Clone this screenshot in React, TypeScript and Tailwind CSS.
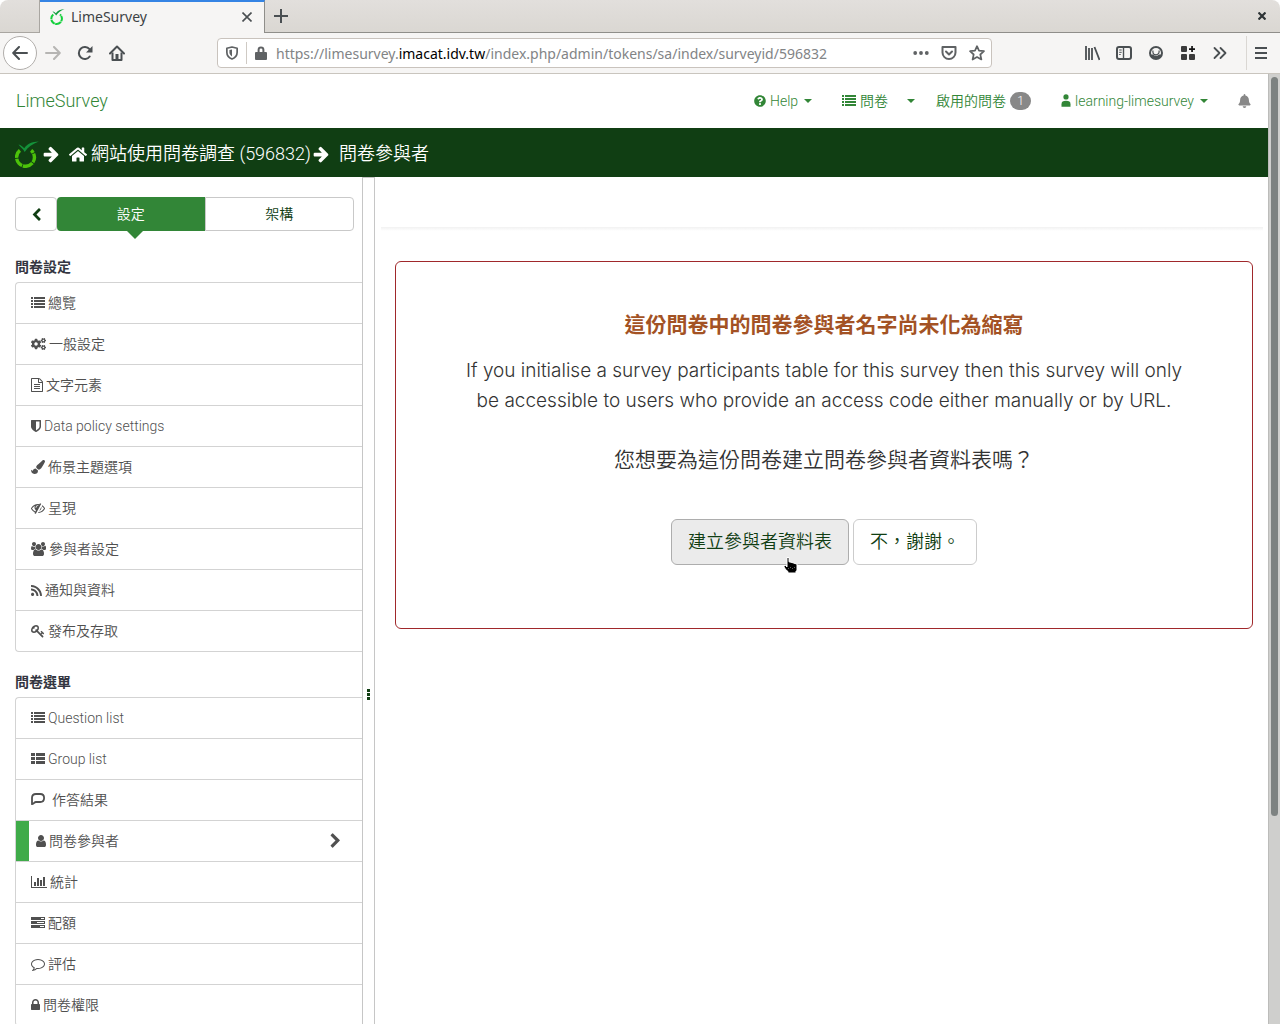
import React from 'react';
import { FaCogs, FaHome, FaQuestionCircle, FaRss, FaPaintBrush, FaBell } from 'react-icons/fa';

type GlyphProps = { d: string; box: string; className: string };

function Glyph({ d, box, className }: GlyphProps) {
  return (
    <svg viewBox={box} className={`shrink-0 ${className}`} fill="currentColor" aria-hidden="true">
      <path d={d} />
    </svg>
  );
}

const SHIELD =
  'M1344 960v-640h-448v1137q119-63 213-137 235-184 235-360zm192-768v768q0 86-33.5 170.5t-83 150-118 127.5-126.5 103-121 77.5-89.5 49.5-42.5 20q-12 6-26 6t-26-6q-16-7-42.5-20t-89.5-49.5-121-77.5-126.5-103-118-127.5-83-150-33.5-170.5v-768q0-26 19-45t45-19h1152q26 0 45 19t19 45z';
const FILE_TEXT =
  'M1596 380q28 28 48 76t20 88v1152q0 40-28 68t-68 28h-1344q-40 0-68-28t-28-68v-1600q0-40 28-68t68-28h896q40 0 88 20t76 48zm-444-244v376h376q-10-29-22-41l-313-313q-12-12-41-22zm384 1528v-1024h-416q-40 0-68-28t-28-68v-416h-768v1536h1280zm-1024-864q0-14 9-23t23-9h704q14 0 23 9t9 23v64q0 14-9 23t-23 9h-704q-14 0-23-9t-9-23v-64zm736 224q14 0 23 9t9 23v64q0 14-9 23t-23 9h-704q-14 0-23-9t-9-23v-64q0-14 9-23t23-9h704zm0 256q14 0 23 9t9 23v64q0 14-9 23t-23 9h-704q-14 0-23-9t-9-23v-64q0-14 9-23t23-9h704z';
const EYE_SLASH =
  'M555 1335l78-141q-87-63-136-159t-49-203q0-121 61-225-229 117-381 353 167 258 427 375zm389-759q0-20-14-34t-34-14q-125 0-214.5 89.5t-89.5 214.5q0 20 14 34t34 14 34-14 14-34q0-86 61-147t147-61q20 0 34-14t14-34zm363-191q0 7-1 9-105 188-315 566t-316 567l-49 89q-10 16-28 16-12 0-134-70-16-10-16-28 0-12 44-87-143-65-263.5-173t-208.5-245q-20-31-20-69t20-69q153-235 380-371t496-136q89 0 180 17l54-97q10-16 28-16 5 0 18 6t31 15.5 33 18.5 31.5 18.5 19.5 11.5q16 10 16 27zm37 447q0 139-79 253.5t-209 164.5l280-502q8 45 8 84zm448 128q0 35-20 69-39 64-109 145-150 172-347.5 267t-419.5 95l74-132q212-18 392.5-137t301.5-307q-115-179-282-294l63-112q95 64 182.5 153t144.5 184q20 34 20 69z';
const USERS =
  'M593 896q-162 5-265 128h-134q-82 0-138-40.5t-56-118.5q0-353 124-353 6 0 43.5 21t97.5 42.5 119 21.5q67 0 133-23-5 37-5 66 0 159 93 291zm1071 637q0 120-73 189.5t-194 69.5h-874q-121 0-194-69.5t-73-189.5q0-53 3.5-103.5t14-109 26.5-108.5 43-97.5 62-81 85.5-53.5 111.5-20q10 0 43 21.5t73 48 107 48 135 21.5 135-21.5 107-48 73-48 43-21.5q61 0 111.5 20t85.5 53.5 62 81 43 97.5 26.5 108.5 14 109 3.5 103.5zm-1024-1277q0 106-75 181t-181 75-181-75-75-181 75-181 181-75 181 75 75 181zm704 384q0 159-112.5 271.5t-271.5 112.5-271.5-112.5-112.5-271.5 112.5-271.5 271.5-112.5 271.5 112.5 112.5 271.5zm576 225q0 78-56 118.5t-138 40.5h-134q-103-123-265-128 93-132 93-291 0-29-5-66 66 23 133 23 59 0 119-21.5t97.5-42.5 43.5-21q124 0 124 353zm-128-609q0 106-75 181t-181 75-181-75-75-181 75-181 181-75 181 75 75 181z';
const KEY =
  'M832 512q0-80-56-136t-136-56-136 56-56 136q0 42 19 83-41-19-83-19-80 0-136 56t-56 136 56 136 136 56 136-56 56-136q0-42-19-83 41 19 83 19 80 0 136-56t56-136zm851 704q0 17-49 66t-66 49q-9 0-28.5-16t-36.5-33-38.5-40-24.5-26l-96 96 220 220q28 28 28 68 0 42-39 81t-81 39q-40 0-68-28l-671-671q-176 131-365 131-163 0-265.5-102.5t-102.5-265.5q0-160 95-313t248-248 313-95q163 0 265.5 102.5t102.5 265.5q0 189-131 365l355 355 96-96q-3-3-26-24.5t-40-38.5-33-36.5-16-28.5q0-17 49-66t66-49q13 0 23 10 6 6 46 44.5t82 79.5 86.5 86 73 78 28.5 41z';
const COMMENT =
  'M896 384q-204 0-381.5 69.5t-282 187.5-104.5 255q0 112 71.5 213.5t201.5 175.5l87 50-27 96q-24 91-70 172 152-63 275-171l43-38 57 6q69 8 130 8 204 0 381.5-69.5t282-187.5 104.5-255-104.5-255-282-187.5-381.5-69.5zm896 512q0 174-120 321.5t-326 233-450 85.5q-70 0-145-8-198 175-460 242-49 14-114 22h-5q-15 0-27-10.5t-16-27.5v-1q-3-4-.5-12t2-10 4.5-9.5l6-9 7-8.5 8-9q7-8 31-34.5t34.5-38 31-39.5 32.5-51 27-59 26-76q-157-89-247.5-220t-90.5-281q0-174 120-321.5t326-233 450-85.5 450 85.5 326 233 120 321.5z';
const USER =
  'M1536 1399q0 109-62.5 187t-150.5 78h-854q-88 0-150.5-78t-62.5-187q0-85 8.5-160.5t31.5-152 58.5-131 94-89 134.5-34.5q131 128 313 128t313-128q76 0 134.5 34.5t94 89 58.5 131 31.5 152 8.5 160.5zm-256-887q0 159-112.5 271.5t-271.5 112.5-271.5-112.5-112.5-271.5 112.5-271.5 271.5-112.5 271.5 112.5 112.5 271.5z';
const CHART =
  'M640 896v512h-256v-512h256zm384-512v1024h-256v-1024h256zm1024 1152v128h-2048v-1536h128v1408h1920zm-640-896v768h-256v-768h256zm384-384v1152h-256v-1152h256z';
const LOCK =
  'M640 768h512v-192q0-106-75-181t-181-75-181 75-75 181v192zm832 96v576q0 40-28 68t-68 28h-960q-40 0-68-28t-28-68v-576q0-40 28-68t68-28h32v-192q0-184 132-316t316-132 316 132 132 316v192h32q40 0 68 28t28 68z';
const CHEVRON =
  'M1363 877l-742 742q-19 19-45 19t-45-19l-166-166q-19-19-19-45t19-45l531-531-531-531q-19-19-19-45t19-45l166-166q19-19 45-19t45 19l742 742q19 19 19 45t-19 45z';
const ARROW =
  'M1600 960q0 54-37 91l-651 651q-39 37-91 37-51 0-90-37l-75-75q-38-38-38-91t38-91l293-293h-704q-52 0-84.5-37.5t-32.5-90.5v-128q0-53 32.5-90.5t84.5-37.5h704l-293-294q-38-36-38-90t38-90l75-75q38-38 90-38 53 0 91 38l651 651q37 35 37 90z';

const ListIcon = () => (
  <svg viewBox="0 0 14 14" className="h-3.5 w-3.5 shrink-0" fill="currentColor" aria-hidden="true">
    <path d="M0 1h2v2H0zM3 1h11v2H3zM0 4h2v2H0zM3 4h11v2H3zM0 7h2v2H0zM3 7h11v2H3zM0 10h2v2H0zM3 10h11v2H3z" />
  </svg>
);
const ThListIcon = () => (
  <svg viewBox="0 0 14 14" className="h-3.5 w-3.5 shrink-0" fill="currentColor" aria-hidden="true">
    <path d="M0 1h4v3H0zM5 1h9v3H5zM0 5h4v3H0zM5 5h9v3H5zM0 9h4v3H0zM5 9h9v3H5z" />
  </svg>
);
const TasksIcon = () => (
  <svg viewBox="0 0 14 14" className="h-3.5 w-3.5 shrink-0" fill="currentColor" aria-hidden="true">
    <path fillRule="evenodd" d="M0 1h14v3H0zM10 2v1h3V2zM0 5h14v3H0zM6 6v1h7V6zM0 9h14v3H0zM9 10v1h4v-1z" />
  </svg>
);
const BubbleIcon = () => (
  <svg viewBox="0 0 18 14" className="h-3.5 w-[18px] shrink-0" fill="none" stroke="currentColor" strokeWidth="1.8" strokeLinejoin="round" aria-hidden="true">
    <path d="M1 11.2V4.800C1 2.300 2.600 1 5 1h4.200C11.600 1 13.100 2.400 13.100 5S11.600 9 9.200 9H5C3.200 9 2.600 11.200 1 11.200z" />
  </svg>
);
const PersonIcon = () => (
  <svg viewBox="0 0 10 14" className="h-3.5 w-2.5 shrink-0" fill="currentColor" aria-hidden="true">
    <circle cx="5" cy="2.900" r="2.600" />
    <path d="M.5 12.700V10.200C.5 7.700 2 6.800 5 6.800s4.500.9 4.500 3.400v2.500z" />
  </svg>
);
const Caret = () => (
  <svg viewBox="0 0 8 4" className="h-1 w-2 shrink-0" fill="currentColor" aria-hidden="true">
    <path d="M0 0h8L4 4z" />
  </svg>
);

function Logo({ className, leaf, ring }: { className: string; leaf: string; ring: string }) {
  return (
    <svg viewBox="0 0 24 27" className={`shrink-0 ${className}`} fill="none" aria-hidden="true">
      <path
        d="M4.900 9.400A8.900 8.900 0 1 0 16.100 9.400"
        stroke={ring}
        strokeWidth="3.400"
        strokeDasharray="8.500 .8 9 .8 10.500 .8 9 .8 12"
      />
      <path d="M3.500 3.600c2.300.7 4.200 1.900 5.700 3.700C12 3.200 17 .7 23.900.6 17.500 2.900 13 6 9.700 11 8.500 8.500 5.500 6.500 3.500 3.600z" fill={leaf} />
    </svg>
  );
}

type Item = { label: string; icon: React.ReactNode; active?: boolean };

const settings: Item[] = [
  { label: '總覽', icon: <ListIcon /> },
  { label: '一般設定', icon: <FaCogs className="h-3.5 w-[15px] shrink-0" /> },
  { label: '文字元素', icon: <Glyph d={FILE_TEXT} box="128 0 1536 1792" className="h-3.5 w-3" /> },
  { label: 'Data policy settings', icon: <Glyph d={SHIELD} box="256 0 1280 1792" className="h-3.5 w-2.5" /> },
  { label: '佈景主題選項', icon: <FaPaintBrush className="h-3.5 w-3.5 shrink-0" /> },
  { label: '呈現', icon: <Glyph d={EYE_SLASH} box="0 0 1792 1792" className="h-3.5 w-3.5" /> },
  { label: '參與者設定', icon: <Glyph d={USERS} box="0 0 1920 1792" className="h-3.5 w-[15px]" /> },
  { label: '通知與資料', icon: <FaRss className="h-[13px] w-[11px] shrink-0" /> },
  { label: '發布及存取', icon: <Glyph d={KEY} box="0 0 1792 1792" className="h-3.5 w-3.5" /> },
];

const menu: Item[] = [
  { label: 'Question list', icon: <ListIcon /> },
  { label: 'Group list', icon: <ThListIcon /> },
  { label: '作答結果', icon: <BubbleIcon /> },
  { label: '問卷參與者', icon: <Glyph d={USER} box="256 0 1280 1792" className="h-3.5 w-2.5" />, active: true },
  { label: '統計', icon: <Glyph d={CHART} box="0 0 2048 1792" className="h-3.5 w-4" /> },
  { label: '配額', icon: <TasksIcon /> },
  { label: '評估', icon: <Glyph d={COMMENT} box="0 0 1792 1792" className="h-3.5 w-3.5" /> },
  { label: '問卷權限', icon: <Glyph d={LOCK} box="320 0 1152 1792" className="h-3.5 w-[9px]" /> },
];

function MenuGroup({ title, items }: { title: string; items: Item[] }) {
  return (
    <section>
      <h2 className="pb-[5px] text-sm leading-5 font-bold text-[#333641]">{title}</h2>
      <ul className="rounded-l border border-r-0 border-[#d3d3d3]">
        {items.map((it) => (
          <li key={it.label} className="border-b border-[#d3d3d3] last:border-b-0">
            <a
              href="#"
              className={
                it.active
                  ? 'flex h-10 items-center gap-[3px] border-l-[13px] border-[#3fab49] pr-5 pl-[7px] text-sm'
                  : 'flex h-10 items-center gap-[3px] pl-[15px] text-sm'
              }
            >
              {it.icon}
              <span>{it.label}</span>
              {it.active && <Glyph d={CHEVRON} box="192 0 1408 1792" className="ml-auto h-4 w-[13px]" />}
            </a>
          </li>
        ))}
      </ul>
    </section>
  );
}

function ToolButton({ label, children, className = '' }: { label: string; children: React.ReactNode; className?: string }) {
  return (
    <button aria-label={label} className={`flex h-8 w-8 shrink-0 items-center justify-center ${className}`}>
      {children}
    </button>
  );
}

function BrowserChrome() {
  return (
    <div className="shrink-0 font-['Noto_Sans','Noto_Sans_CJK_TC',sans-serif] text-[#4a4f52]">
      <div className="flex h-[33px] rounded-t-lg bg-gradient-to-b from-[#e2dfdc] to-[#dad7d2]">
        <div className="w-10 border-r border-b border-[#a9a6a1]" />
        <div className="flex w-[225px] items-center border-t-2 border-r border-t-[#3584e4] border-r-[#8f8e8a] bg-[#f6f5f4] pr-3 pb-0.5 pl-2.5">
          <Logo className="h-4 w-[15px]" leaf="#0f9d3c" ring="#14d03c" />
          <span className="ml-1.5 text-sm leading-5 text-[#3c4245]">LimeSurvey</span>
          <button aria-label="Close tab" className="ml-auto">
            <svg viewBox="0 0 10 10" className="h-2.5 w-2.5" stroke="currentColor" strokeWidth="1.600" aria-hidden="true">
              <path d="M.5.5l9 9M9.500.5l-9 9" />
            </svg>
          </button>
        </div>
        <div className="flex flex-1 items-center justify-between border-b border-[#8f8e8a] pr-3.5 pl-[9px]">
          <button aria-label="New tab">
            <svg viewBox="0 0 14 14" className="h-3.5 w-3.5" stroke="currentColor" strokeWidth="2" aria-hidden="true">
              <path d="M7 0v14M0 7h14" />
            </svg>
          </button>
          <button aria-label="Close window">
            <svg viewBox="0 0 8 8" className="h-2 w-2" stroke="#2e3436" strokeWidth="2.200" aria-hidden="true">
              <path d="M.5.5l7 7M7.500.5l-7 7" />
            </svg>
          </button>
        </div>
      </div>
      <div className="flex h-[41px] items-center border-b border-[#c9c5be] bg-[#f6f5f4] pr-[5px] pl-[3px]">
        <button aria-label="Back" className="flex h-[34px] w-[34px] shrink-0 items-center justify-center rounded-full border border-[#b1aeab] bg-white">
          <svg viewBox="0 0 16 14" className="h-3.5 w-4" fill="none" stroke="currentColor" strokeWidth="2" strokeLinecap="round" strokeLinejoin="round" aria-hidden="true">
            <path d="M15 7H1.500M7 1L1.200 7 7 13" />
          </svg>
        </button>
        <ToolButton label="Forward" className="text-[#b6b5b3]">
          <svg viewBox="0 0 16 14" className="h-3.5 w-4" fill="none" stroke="currentColor" strokeWidth="2" strokeLinecap="round" strokeLinejoin="round" aria-hidden="true">
            <path d="M1 7h13.500M9 1l5.800 6L9 13" />
          </svg>
        </ToolButton>
        <ToolButton label="Reload">
          <svg viewBox="0 0 16 16" className="h-4 w-4" fill="none" stroke="currentColor" strokeWidth="2" aria-hidden="true">
            <path d="M12.700 11.500A6 6 0 1 1 12.500 4.200" strokeLinecap="round" />
            <path d="M15.500 1v6.500H9z" fill="currentColor" stroke="none" />
          </svg>
        </ToolButton>
        <ToolButton label="Home">
          <svg viewBox="0 0 16 16" className="h-4 w-4" fill="none" stroke="currentColor" strokeWidth="2" strokeLinejoin="round" aria-hidden="true">
            <path d="M1 8.500L8 1.500l7 7" strokeLinecap="round" />
            <path d="M3.500 7.500V15h9V7.500" />
            <path d="M6.500 9h3v6h-3z" fill="currentColor" stroke="none" />
          </svg>
        </ToolButton>
        <div className="mx-[84px] flex h-[30px] min-w-0 flex-1 items-center rounded border border-[#c9c3bd] bg-white pr-1.5 pl-2 text-[#5f6264]">
          <svg viewBox="0 0 14 16" className="h-3.5 w-3 shrink-0" fill="none" stroke="currentColor" strokeWidth="2" aria-hidden="true">
            <path d="M7 1l6 1.500V7c0 3.500-2 6.300-6 8C3 13.300 1 10.500 1 7V2.500z" strokeLinejoin="round" />
            <path d="M7 4v8C5 10.500 4 9 4 7V4.600z" fill="currentColor" stroke="none" />
          </svg>
          <span className="ml-2 h-[22px] w-px shrink-0 bg-[#cfcac4]" />
          <svg viewBox="0 0 12 14" className="ml-2 h-3.5 w-3 shrink-0" fill="currentColor" aria-hidden="true">
            <path d="M3.600 6V3.800a2.400 2.400 0 0 1 4.800 0V6" fill="none" stroke="currentColor" strokeWidth="2" />
            <rect y="6" width="12" height="8" rx="1" />
          </svg>
          <div className="ml-[9px] min-w-0 flex-1 truncate pt-0.5 text-sm leading-5 text-[#828486]">
            https://limesurvey.<span className="text-black">imacat.idv.tw</span>/index.php/admin/tokens/sa/index/surveyid/596832
          </div>
          <div className="flex shrink-0 items-center gap-3">
            <button aria-label="Page actions">
              <svg viewBox="0 0 16 4" className="h-1 w-4" fill="currentColor" aria-hidden="true">
                <circle cx="2.200" cy="2" r="1.900" />
                <circle cx="8" cy="2" r="1.900" />
                <circle cx="13.800" cy="2" r="1.900" />
              </svg>
            </button>
            <button aria-label="Save to Pocket">
              <svg viewBox="0 0 16 16" className="h-4 w-4" fill="none" stroke="currentColor" strokeWidth="2" strokeLinecap="round" strokeLinejoin="round" aria-hidden="true">
                <path d="M1.500 2h13v5.500a6.500 6.500 0 0 1-13 0z" />
                <path d="M5 6.500l3 3 3-3" />
              </svg>
            </button>
            <button aria-label="Bookmark">
              <svg viewBox="0 0 16 16" className="h-4 w-4" fill="none" stroke="currentColor" strokeWidth="1.700" strokeLinejoin="round" aria-hidden="true">
                <path d="M8 1.200l2 4.500 5 .5-3.700 3.300 1.100 5L8 12l-4.400 2.500 1.100-5L1 6.200l5-.5z" />
              </svg>
            </button>
          </div>
        </div>
        <ToolButton label="Library">
          <svg viewBox="0 0 16 16" className="h-4 w-4" fill="none" stroke="currentColor" strokeWidth="1.800" aria-hidden="true">
            <path d="M2 1v14M5 3v12M8 3v12M10.500 2l5 13" />
          </svg>
        </ToolButton>
        <ToolButton label="Sidebars">
          <svg viewBox="0 0 16 16" className="h-4 w-4" fill="none" stroke="currentColor" aria-hidden="true">
            <rect x="1" y="2" width="14" height="12" rx="2" strokeWidth="2" />
            <path d="M7.500 2v12" strokeWidth="1.400" />
            <path d="M3.200 5h2.500M3.200 7.300h2.500M3.200 9.500h1.500" strokeWidth="1" />
          </svg>
        </ToolButton>
        <ToolButton label="Account">
          <svg viewBox="0 0 16 16" className="h-4 w-4" fill="none" stroke="currentColor" strokeWidth="2" aria-hidden="true">
            <circle cx="8" cy="8" r="6" />
            <path d="M2.500 9.500H5c1.500 1.700 4.500 1.700 6 0h2.500L12 13H4z" fill="currentColor" stroke="none" />
            <path d="M4.900 5.500v1.200a3.100 3.100 0 0 0 6.200 0V5.500" strokeWidth="1.200" />
          </svg>
        </ToolButton>
        <ToolButton label="Extensions">
          <svg viewBox="0 0 16 16" className="h-4 w-4" fill="#3b3b3b" aria-hidden="true">
            <rect x="1" y="1" width="6" height="6" rx="1" />
            <rect x="1" y="9" width="6" height="6" rx="1" />
            <rect x="9" y="9" width="6" height="6" rx="1" />
            <path d="M11.200 1h1.700v2.200H15v1.700h-2.100V7h-1.700V4.900H9V3.200h2.200z" fill="#111" />
          </svg>
        </ToolButton>
        <ToolButton label="More tools">
          <svg viewBox="0 0 16 16" className="h-4 w-4" fill="none" stroke="currentColor" strokeWidth="1.800" strokeLinecap="round" strokeLinejoin="round" aria-hidden="true">
            <path d="M2.500 3l5 5-5 5M8.500 3l5 5-5 5" />
          </svg>
        </ToolButton>
        <span className="ml-2.5 h-[34px] w-px shrink-0 bg-[#dad7d3]" />
        <button aria-label="Open menu" className="flex h-8 w-7 shrink-0 items-center justify-center">
          <svg viewBox="0 0 12 12" className="h-3 w-3" stroke="currentColor" strokeWidth="2" aria-hidden="true">
            <path d="M0 1h12M0 6h12M0 11h12" />
          </svg>
        </button>
      </div>
    </div>
  );
}

export default function App() {
  return (
    <div className="flex h-screen flex-col overflow-hidden bg-white">
      <BrowserChrome />
      <div className="flex min-h-0 flex-1 font-['Roboto','Noto_Sans_CJK_TC',sans-serif] font-[350] text-[#505050]">
        <div className="flex min-w-0 flex-1 flex-col">
          <header className="flex h-[54px] shrink-0 items-center justify-between pr-[17px] pl-4 text-sm text-[#328637]">
            <a href="#" className="text-lg leading-6">LimeSurvey</a>
            <nav className="flex items-center">
              <a href="#" className="flex items-center">
                <FaQuestionCircle className="mr-1 h-3 w-3" />
                Help
                <span className="ml-1.5"><Caret /></span>
              </a>
              <a href="#" className="ml-[30px] flex items-center gap-1">
                <ListIcon />
                問卷
              </a>
              <button aria-label="Survey menu" className="ml-[19px]">
                <Caret />
              </button>
              <a href="#" className="ml-[21px] flex items-center gap-1">
                啟用的問卷
                <span className="flex h-[18px] w-[21px] items-center justify-center rounded-full bg-[#888] text-xs leading-3 text-white">1</span>
              </a>
              <a href="#" className="ml-[30px] flex items-center">
                <PersonIcon />
                <span className="mr-1.5 ml-1">learning-limesurvey</span>
                <Caret />
              </a>
              <button aria-label="Notifications" className="ml-[30px]">
                <FaBell className="h-3.5 w-[13px] text-[#888]" />
              </button>
            </nav>
          </header>

          <div className="flex h-[49px] shrink-0 items-center bg-[#103e13] pt-[3px] pl-[15px] text-lg leading-6 text-white">
            <Logo className="h-[27px] w-6" leaf="#14923a" ring="#4cc30a" />
            <Glyph d={ARROW} box="64 0 1600 1792" className="ml-1 h-[18px] w-4" />
            <a href="#" className="ml-2.5 flex items-center">
              <FaHome className="mr-1 h-[17px] w-[18px]" />
              網站使用問卷調查 (596832)
            </a>
            <Glyph d={ARROW} box="64 0 1600 1792" className="ml-0.5 h-[18px] w-4" />
            <span className="ml-2.5">問卷參與者</span>
          </div>

          <div className="flex min-h-0 flex-1">
            <aside className="w-[363px] shrink-0 overflow-hidden border-r border-[#c6c6c6] pt-5 pl-[15px]">
              <div className="mr-2 mb-[26px] flex h-[34px] text-sm text-[#103e13]">
                <button aria-label="Collapse" className="flex w-[42px] items-center justify-center rounded border border-[#c9c9c9]">
                  <Glyph d={CHEVRON} box="192 0 1408 1792" className="h-3.5 w-[11px] rotate-180" />
                </button>
                <button className="relative flex-1 rounded-l bg-[#328637] text-white">
                  設定
                  <svg viewBox="0 0 16 8" className="absolute top-full left-[70px] h-2 w-4" fill="#328637" aria-hidden="true">
                    <path d="M0 0h16L8 8z" />
                  </svg>
                </button>
                <button className="flex-1 rounded-r border border-[#c9c9c9]">架構</button>
              </div>
              <div className="flex flex-col gap-5">
                <MenuGroup title="問卷設定" items={settings} />
                <MenuGroup title="問卷選單" items={menu} />
              </div>
            </aside>
            <div className="flex w-3 shrink-0 flex-col items-center border-t border-r border-[#c6c6c6] pt-[511px]">
              <svg viewBox="0 0 3 11" className="h-[11px] w-[3px]" fill="#103e13" aria-hidden="true">
                <path d="M0 0h3v3H0zM0 4h3v3H0zM0 8h3v3H0z" />
              </svg>
            </div>
            <main className="min-w-0 flex-1">
              <div className="mr-[5px] ml-1.5 h-[50px]" />
              <div className="mr-[5px] ml-1.5 h-1 bg-gradient-to-b from-[#f1f1f1] to-white" />
              <section className="mt-[30px] mr-[15px] ml-5 rounded-md border border-[#a0282b] px-12 pt-12 pb-[63px] text-center text-[21px] leading-[30px] text-[#333]">
                <h1 className="font-bold text-[#a35224]">這份問卷中的問卷參與者名字尚未化為縮寫</h1>
                <p className="mx-auto mt-4 max-w-[740px] font-['Inter',sans-serif] text-[19px] font-light">
                  If you initialise a survey participants table for this survey then this survey will only be accessible to users who provide an access code either manually or by URL.
                </p>
                <p className="mt-[29px]">您想要為這份問卷建立問卷參與者資料表嗎？</p>
                <div className="mt-11 flex justify-center gap-1 text-lg text-[#103e13]">
                  <button className="relative h-[46px] rounded-md border border-[#adadad] bg-[#ebebeb] px-4">
                    建立參與者資料表
                    <svg viewBox="0 0 16 18" className="absolute top-9 left-[111px] h-[18px] w-4" aria-hidden="true">
                      <path
                        d="M4 1.500h2v4.300l2 .4 2 .6 2 .7 2 .5V15H13v2H5v-1.500L3 14l-2-3V9.500h1.500L4 11z"
                        fill="#000"
                        stroke="#fff"
                        strokeLinejoin="round"
                      />
                      <path d="M5.500 12v1M7.500 11v1M9.500 12v1M11.500 11v1" stroke="#777" strokeWidth=".8" />
                    </svg>
                  </button>
                  <button className="h-[46px] rounded-md border border-[#ccc] px-4">不，謝謝。</button>
                </div>
              </section>
            </main>
          </div>
        </div>
        <div className="w-3 shrink-0 border-l border-[#bcbcba] bg-[#cfcfcd] px-0.5 pt-[3px]">
          <div className="h-[78%] rounded-full bg-[#7d8281]" />
        </div>
      </div>
    </div>
  );
}
